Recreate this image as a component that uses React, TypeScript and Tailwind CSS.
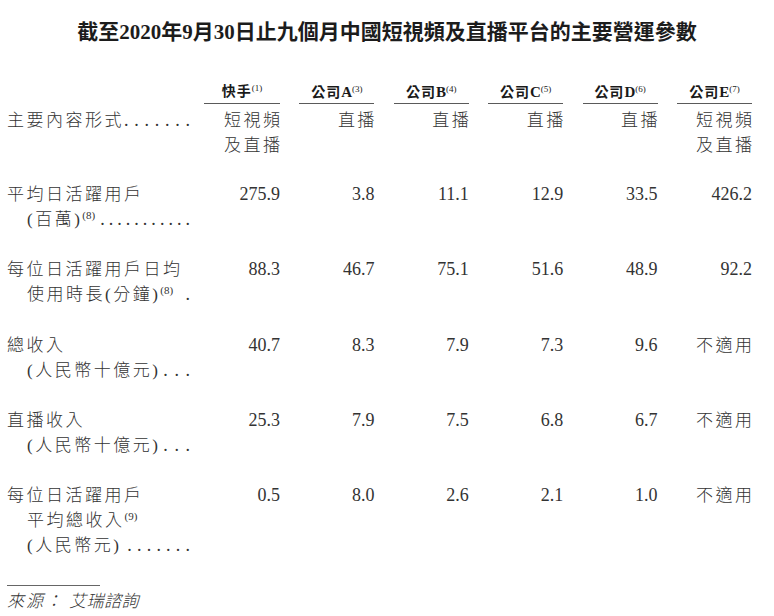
import React from "react";

const GRID =
  "grid grid-cols-[177.6px_76px_repeat(5,75px)] gap-x-[19.4px] pl-[7px]";

type Line = {
  text: string;
  indent?: boolean;
  sup?: string;
  dots?: number;
  dotsCls?: string;
};

function LabelLine({ l }: { l: Line }) {
  const n = l.dots ?? 0;
  return (
    <div
      className={`flex h-[25px] items-baseline whitespace-nowrap leading-[25px] ${
        l.indent ? "w-[163px] ml-[20px]" : "w-[183px]"
      }`}
    >
      <span className="tracking-[2.5px] text-[17px] font-light">{l.text}</span>
      {l.sup && (
        <span className="relative -top-[6px] text-[11px] tracking-normal">
          ({l.sup})
        </span>
      )}
      {n > 0 && (
        <span
          className={`flex flex-1 text-[18px] ${
            n === 1 ? "justify-end" : "justify-between"
          } ${l.dotsCls ?? ""}`}
        >
          {Array.from({ length: n }).map((_, i) => (
            <span key={i}>.</span>
          ))}
        </span>
      )}
    </div>
  );
}

function Label({ lines }: { lines: Line[] }) {
  return (
    <div>
      {lines.map((l, i) => (
        <LabelLine key={i} l={l} />
      ))}
    </div>
  );
}

function Num({ v }: { v: string }) {
  return <div className="text-right text-[18px] leading-[25px]">{v}</div>;
}

function Cjk({ lines }: { lines: string[] }) {
  return (
    <div className="text-right text-[17px] leading-[25px] font-light">
      {lines.map((s, i) => (
        <div key={i} className="h-[25px]">
          <span className="tracking-[2.5px] mr-[-2.5px]">{s}</span>
        </div>
      ))}
    </div>
  );
}

function Head({ name, latin, sup }: { name: string; latin?: string; sup: string }) {
  return (
    <div className="h-[21.5px] border-b-[1.5px] border-[#5a5a5a] text-center text-[14px] leading-[20px] font-bold text-[#1a1a1a] whitespace-nowrap">
      <span className="tracking-[1px]">{name}</span>
      {latin && <span className="text-[15px]">{latin}</span>}
      <span className="relative -top-[5px] text-[9px] font-normal">({sup})</span>
    </div>
  );
}

const NA = () => <Cjk lines={["不適用"]} />;

export default function App() {
  return (
    <div className="w-[774px] h-[616px] overflow-hidden bg-white text-[#333] font-['Liberation_Serif','Noto_Sans_CJK_TC',serif]">
      <div className="pt-[18px] h-[46px] text-center text-[21px] leading-[28px] font-bold text-[#1c1c1c] whitespace-nowrap">
        截至2020年9月30日止九個月中國短視頻及直播平台的主要營運參數
      </div>

      <div className={`${GRID} mt-[36px]`}>
        <div />
        <Head name="快手" sup="1" />
        <Head name="公司" latin="A" sup="3" />
        <Head name="公司" latin="B" sup="4" />
        <Head name="公司" latin="C" sup="5" />
        <Head name="公司" latin="D" sup="6" />
        <Head name="公司" latin="E" sup="7" />
      </div>

      <div className="mt-[4px]">
        <div className={`${GRID} h-[74px]`}>
          <Label lines={[{ text: "主要內容形式", dots: 7 }]} />
          <Cjk lines={["短視頻", "及直播"]} />
          <Cjk lines={["直播"]} />
          <Cjk lines={["直播"]} />
          <Cjk lines={["直播"]} />
          <Cjk lines={["直播"]} />
          <Cjk lines={["短視頻", "及直播"]} />
        </div>

        <div className={`${GRID} h-[75px]`}>
          <Label
            lines={[
              { text: "平均日活躍用戶" },
              { text: "(百萬)", indent: true, sup: "8", dots: 11, dotsCls: "ml-[5px]" },
            ]}
          />
          <Num v="275.9" />
          <Num v="3.8" />
          <Num v="11.1" />
          <Num v="12.9" />
          <Num v="33.5" />
          <Num v="426.2" />
        </div>

        <div className={`${GRID} h-[76px]`}>
          <Label
            lines={[
              { text: "每位日活躍用戶日均" },
              { text: "使用時長(分鐘)", indent: true, sup: "8", dots: 1 },
            ]}
          />
          <Num v="88.3" />
          <Num v="46.7" />
          <Num v="75.1" />
          <Num v="51.6" />
          <Num v="48.9" />
          <Num v="92.2" />
        </div>

        <div className={`${GRID} h-[75px]`}>
          <Label
            lines={[
              { text: "總收入" },
              { text: "(人民幣十億元)", indent: true, dots: 3, dotsCls: "ml-[3px]" },
            ]}
          />
          <Num v="40.7" />
          <Num v="8.3" />
          <Num v="7.9" />
          <Num v="7.3" />
          <Num v="9.6" />
          <NA />
        </div>

        <div className={`${GRID} h-[75px]`}>
          <Label
            lines={[
              { text: "直播收入" },
              { text: "(人民幣十億元)", indent: true, dots: 3, dotsCls: "ml-[3px]" },
            ]}
          />
          <Num v="25.3" />
          <Num v="7.9" />
          <Num v="7.5" />
          <Num v="6.8" />
          <Num v="6.7" />
          <NA />
        </div>

        <div className={GRID}>
          <Label
            lines={[
              { text: "每位日活躍用戶" },
              { text: "平均總收入", indent: true, sup: "9" },
              { text: "(人民幣元)", indent: true, dots: 7, dotsCls: "ml-[6px]" },
            ]}
          />
          <Num v="0.5" />
          <Num v="8.0" />
          <Num v="2.6" />
          <Num v="2.1" />
          <Num v="1.0" />
          <NA />
        </div>
      </div>

      <div className="ml-[7px] mt-[27px] h-[1.5px] w-[93px] bg-[#666]" />
      <div className="ml-[7px] mt-[3px] text-[17px] leading-[25px] italic font-light whitespace-nowrap">
        <span className="tracking-[2px]">來源：</span>
        <span className="ml-[5px] tracking-[0.5px]">艾瑞諮詢</span>
      </div>
    </div>
  );
}
